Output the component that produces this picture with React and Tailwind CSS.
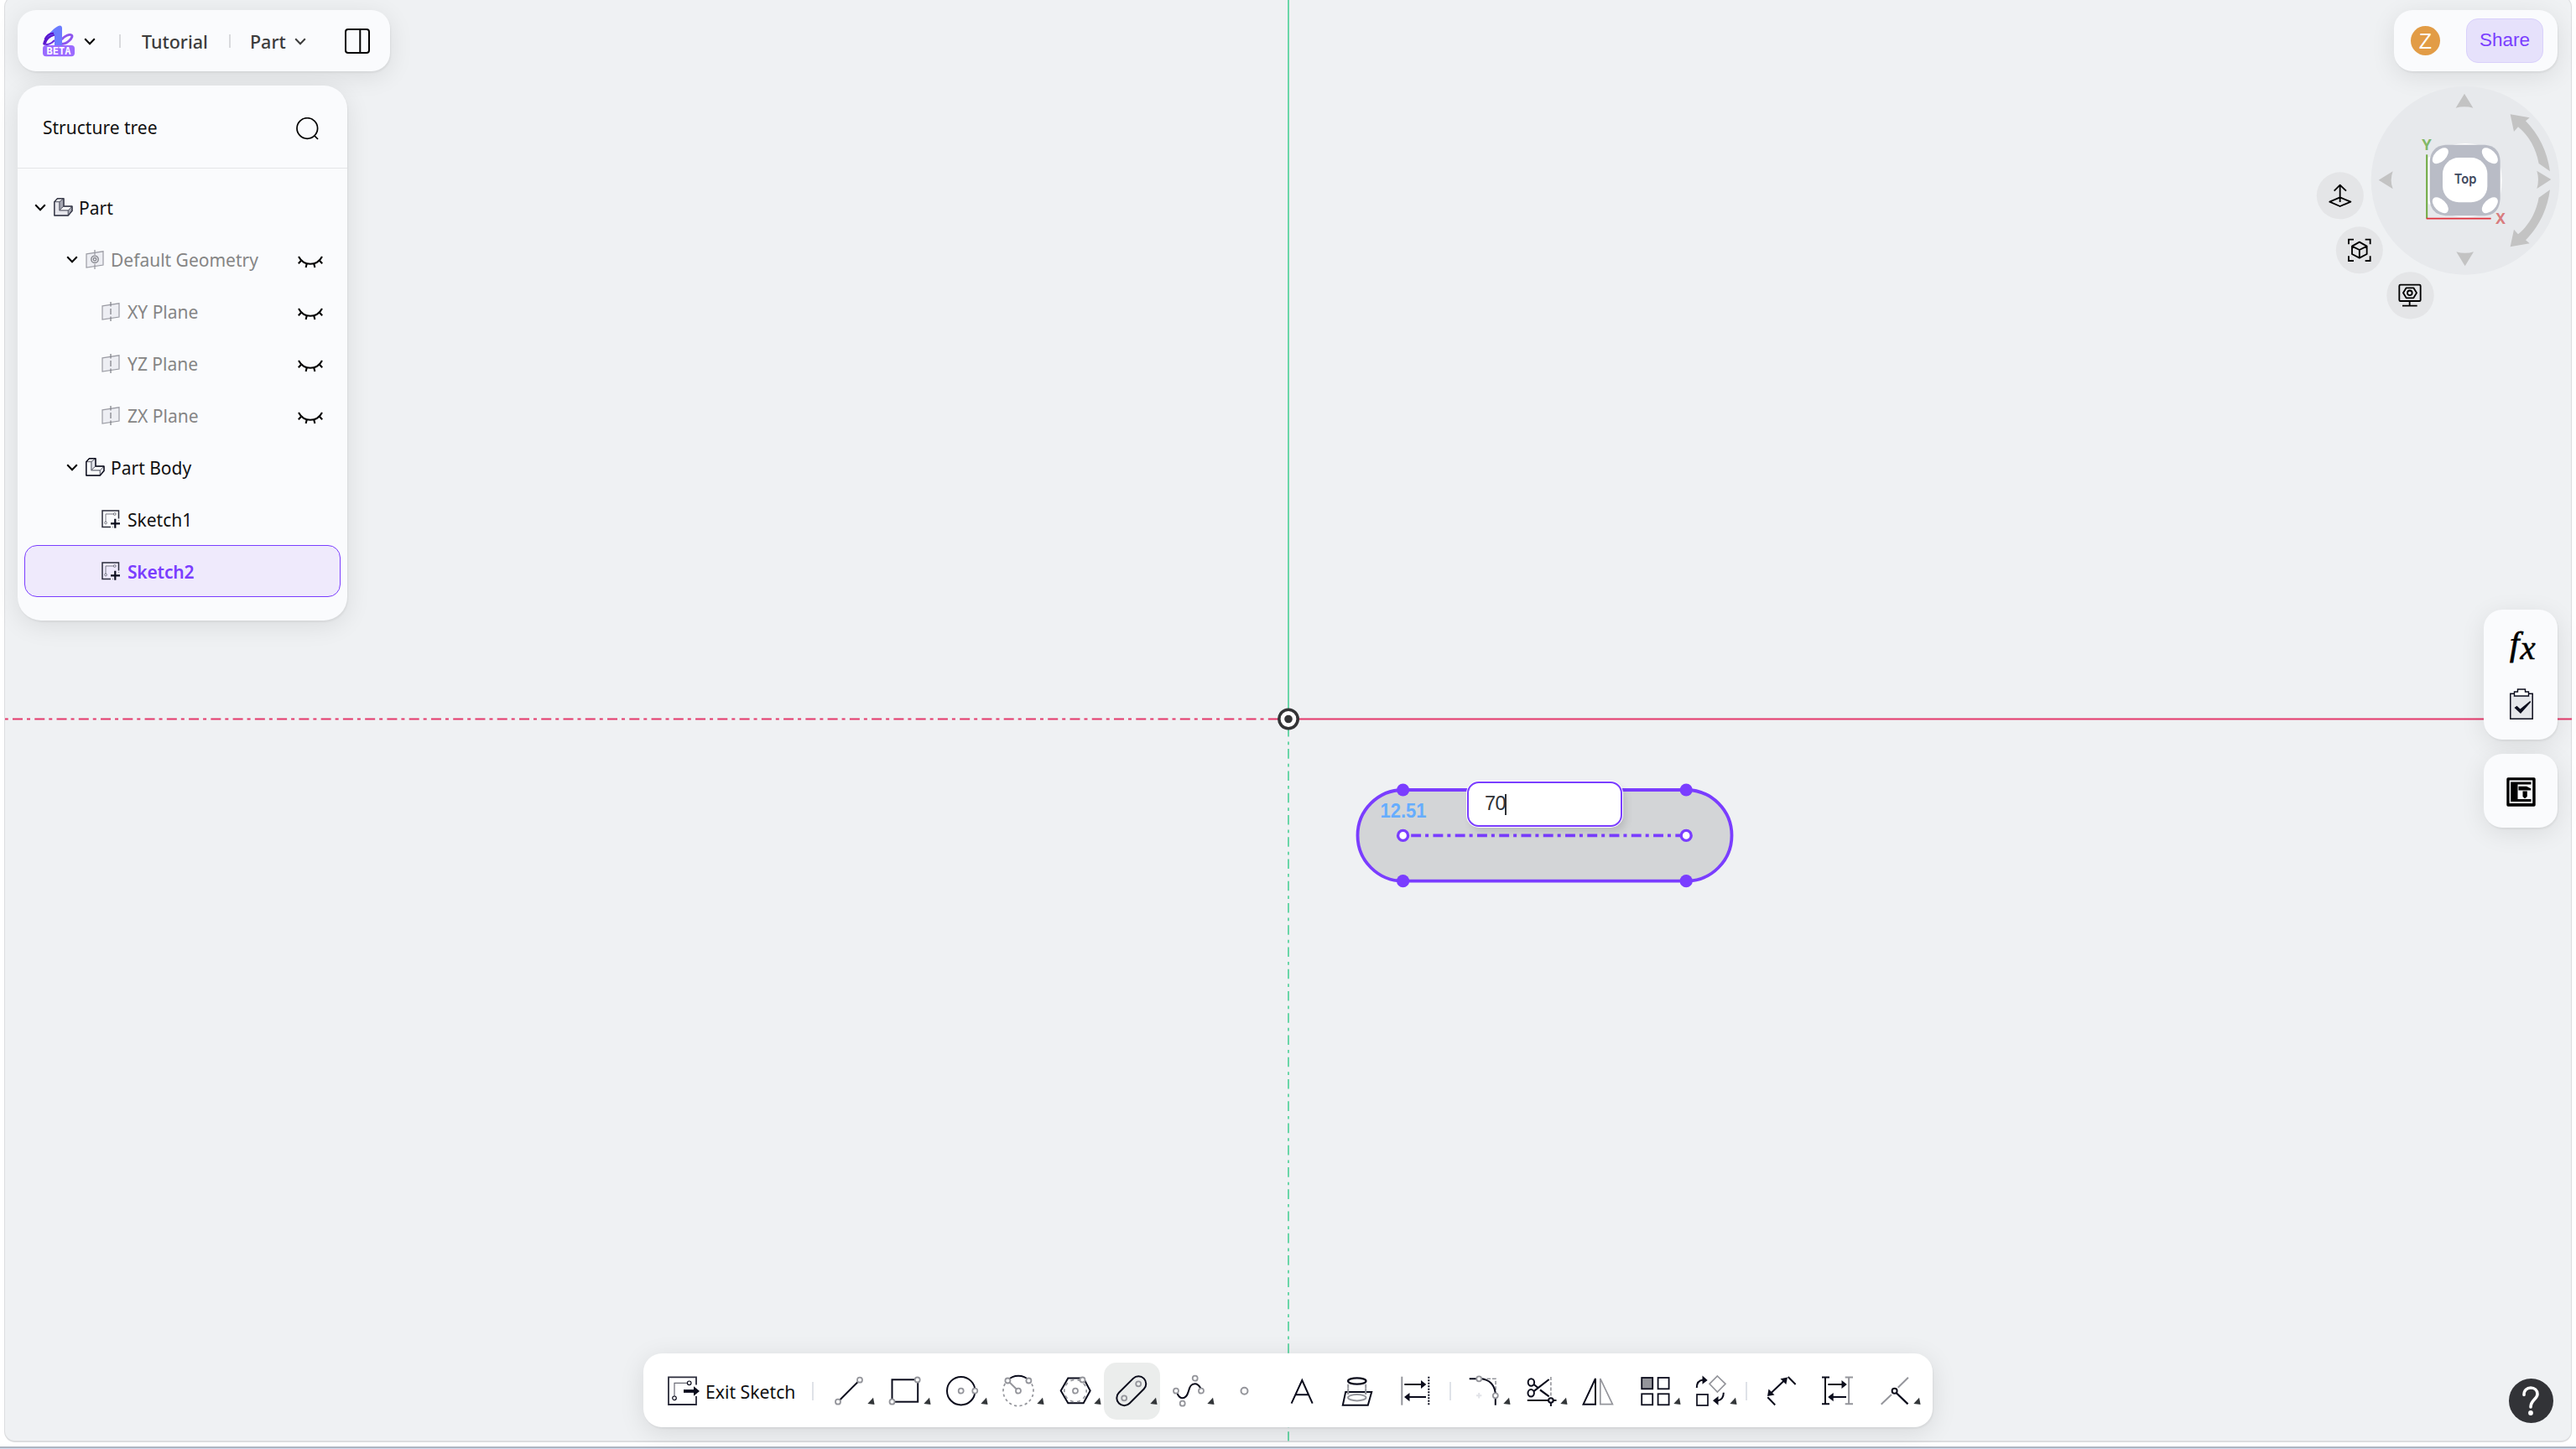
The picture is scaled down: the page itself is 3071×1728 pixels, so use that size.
import React from "react";

const INK = "#0b0c1c";
const GRAY = "#94959b";

const CARD =
  "bg-[#fafbfd] shadow-[1px_2px_2px_rgba(0,0,0,0.05),0_6px_30px_rgba(0,0,0,0.09)]";

function Chevron({ color = "#000", className = "" }) {
  return (
    <svg width="14" height="9" viewBox="0 0 14 9" fill="none" className={className}>
      <path d="M1.2 1.2 L7 7.2 L12.8 1.2" stroke={color} strokeWidth="2" />
    </svg>
  );
}

function Logo() {
  return (
    <svg width="38" height="38" viewBox="0 0 38 38">
      <path d="M13.500 11 C8 12 3 17 2 22" fill="none" stroke="#5a16cf" strokeWidth="3.600" strokeLinecap="round" />
      <path d="M3 22.500 C6 24 11 21.500 14 18" fill="none" stroke="#6a2be0" strokeWidth="2" />
      <path d="M22.500 22.500 C30 22.500 36.500 14 34.500 12 C32 10 26 13 22.500 17" fill="none" stroke="#8d55ee" strokeWidth="2.800" />
      <path d="M3 16.500 C8 9 14 3 18.500 1 C21 -.3 23 1 23 3.500 V25 H14 V11 C9.500 11.500 6 13.500 3 16.500 Z" fill="#6b7cff" />
      <path d="M2.500 17 C5 12 9 9.500 13 10" fill="none" stroke="#5a16cf" strokeWidth="2.400" />
      <rect x="0" y="24" width="38" height="13.200" rx="4" fill="#9b6bff" />
      <text x="19" y="35" textAnchor="middle" textLength="29" lengthAdjust="spacingAndGlyphs" fontFamily="'DejaVu Sans Mono', monospace" fontWeight="700" fontSize="12.500" fill="#fff">
        BETA
      </text>
    </svg>
  );
}

function PartIcon({ shaded }) {
  const inner = shaded ? "#5d5f6d" : "#6a6b78";
  return (
    <svg width="23" height="22" viewBox="0 0 23 22" fill="none" strokeLinejoin="round">
      <g stroke={inner} strokeWidth="1">
        <path d="M.8 4.700 L4.400 .8 H12 L6.800 4.700 Z" fill="#fff" />
        <path d="M6.800 4.700 L12 .8 V10 L6.800 14.800 Z" fill={shaded ? "#a5a6b1" : "#e3e4ea"} />
        <path d="M.8 4.700 H6.800 V14.800 H17.300 V21 H.8 Z" fill={shaded ? "#e6e6ec" : "#fafbfd"} />
        <path d="M6.800 14.800 L12 10 H22 L17.300 14.800 Z" fill="#fff" />
        <path d="M17.300 14.800 L22 10 V15.500 L17.300 21 Z" fill={shaded ? "#a5a6b1" : "#e3e4ea"} />
      </g>
      <path d="M.8 21 V4.700 L4.400 .8 H12 V10 H22 V15.500 L17.300 21 Z" stroke={shaded ? "#3b3d4c" : INK} strokeWidth="1.400" />
    </svg>
  );
}

function PlaneIcon({ geometry }) {
  return (
    <svg width="22" height="23" viewBox="0 0 22 23" fill="none" stroke="#9b9ca4" strokeWidth="1.200">
      <path d="M1 4.800 L21 1.800 V18 L1 21 Z" fill="#edeef3" />
      {geometry ? (
        <>
          <path d="M11 0 V6 M11 17 V23" strokeWidth="1.300" />
          <circle cx="11" cy="11.300" r="4.200" stroke="#85868d" strokeWidth="1.400" />
          <circle cx="11" cy="11.300" r="1.800" stroke="#85868d" strokeWidth="1.300" />
        </>
      ) : (
        <path d="M11 0 V5.500 M11 8 V15 M11 17.500 V23" stroke="#85868d" strokeWidth="1.300" />
      )}
    </svg>
  );
}

function SketchIcon() {
  return (
    <svg width="22" height="22" viewBox="0 0 22 22" fill="none">
      <path d="M20.500 10.500 V1 H1 V20.500 H11" stroke="#2b2c3a" strokeWidth="1.500" />
      <path d="M13.500 20.500 H14 M20.500 12 V12.500" stroke="#2b2c3a" strokeWidth="1.300" />
      <path d="M5 14 V5 H14" stroke="#7c7d86" strokeWidth="1" />
      <circle cx="15.700" cy="5" r="1.400" stroke="#6a6b75" strokeWidth=".9" />
      <circle cx="5" cy="15.500" r="1.400" stroke="#6a6b75" strokeWidth=".9" />
      <path d="M16.300 10.800 V21.800 M11 16.300 H22" stroke={INK} strokeWidth="2.200" />
    </svg>
  );
}

function HiddenEye() {
  return (
    <svg width="30" height="15" viewBox="0 0 30 15" fill="none" stroke="#000" strokeWidth="2.100">
      <path d="M1 1 C4 6.500 9 9.800 15 9.800 S26 6.500 29 1" />
      <path d="M4.800 5 L.8 9.300 M10.800 9.300 L9.600 14 M19.200 9.300 L20.400 14 M25.200 5 L29.200 9.300" />
    </svg>
  );
}

const TREE = [
  { label: "Part", level: 0, icon: "part" },
  { label: "Default Geometry", level: 1, icon: "geometry", hidden: true },
  { label: "XY Plane", level: 2, icon: "plane", hidden: true },
  { label: "YZ Plane", level: 2, icon: "plane", hidden: true },
  { label: "ZX Plane", level: 2, icon: "plane", hidden: true },
  { label: "Part Body", level: 1, icon: "body" },
  { label: "Sketch1", level: 2, icon: "sketch" },
  { label: "Sketch2", level: 2, icon: "sketch", selected: true },
];

const INDENT = ["pl-[11px]", "pl-[49px]", "pl-[91px]"];

function TreeRow({ label, level, icon, hidden, selected }) {
  const tone = selected
    ? "font-semibold tracking-[-0.2px] text-[#7a3dff]"
    : hidden
      ? "text-[#858585]"
      : "text-[#111]";
  return (
    <div
      className={`flex h-[62px] items-center rounded-[15px] border pr-[20px] ${INDENT[level]} ${
        selected ? "border-[#7a3dff] bg-[#efeafc]" : "border-transparent"
      }`}
    >
      {level < 2 && <Chevron className="mr-[9px]" />}
      <span className={`flex items-center ${level < 2 ? "w-[30px]" : "w-[31px]"}`}>
        {icon === "part" && <PartIcon shaded />}
        {icon === "body" && <PartIcon />}
        {icon === "geometry" && <PlaneIcon geometry />}
        {icon === "plane" && <PlaneIcon />}
        {icon === "sketch" && <SketchIcon />}
      </span>
      <span className={`flex-1 pt-[2px] whitespace-nowrap ${tone}`}>{label}</span>
      {hidden && (
        <span className="mt-[6px]">
          <HiddenEye />
        </span>
      )}
    </div>
  );
}

function TopBar() {
  return (
    <div className={`flex h-[73px] w-[444px] items-center rounded-[22px] pt-px pl-[30px] text-[21.500px] font-medium text-[#3c3c3c] ${CARD}`}>
      <Logo />
      <Chevron className="ml-[11px]" />
      <span className="ml-[28px] h-[16px] w-[2px] bg-[#d9dadd]" />
      <span className="ml-[25px] w-[104px] pt-px">Tutorial</span>
      <span className="h-[16px] w-[2px] bg-[#d9dadd]" />
      <span className="ml-[23px] w-[53px] pt-px">Part</span>
      <Chevron color="#3c3c3c" />
      <svg width="30" height="30" viewBox="0 0 30 30" fill="none" stroke="#000" strokeWidth="2" className="ml-[46px]">
        <rect x="1" y="1" width="28" height="28" rx="3" />
        <path d="M18.300 1 V29" />
      </svg>
    </div>
  );
}

function StructureTree() {
  return (
    <div className={`mt-[17px] h-[638px] w-[392.500px] rounded-[28px] ${CARD}`}>
      <div className="flex h-[99px] items-center justify-between border-b border-[#e4e5e8] pr-[34px] pl-[30px] text-[#111]">
        <span className="pt-[2px]">Structure tree</span>
        <svg width="27" height="27" viewBox="0 0 27 27" fill="none" stroke="#000" strokeWidth="1.700" className="mt-[4px]">
          <circle cx="13.300" cy="13" r="12.300" />
          <path d="M21.500 21.500 L26 26" />
        </svg>
      </div>
      <div className="px-[8px] pt-[15px]">
        {TREE.map((row) => (
          <TreeRow key={row.label} {...row} />
        ))}
      </div>
    </div>
  );
}

function ViewWheel() {
  return (
    <svg width="293.330" height="279" viewBox="60 305 880 837" fill="none" className="mt-[16.670px] mr-[-3px]">
      <circle cx="597" cy="645" r="337" fill="#e7e9ec" />
      <g fill="#c3c3c3">
        <path d="M594 334 L625 385 Q594 377 563 385 Z" />
        <path d="M596 951 L565 900 Q596 909 627 900 Z" />
        <path d="M287 643 L338 612 Q326 643 338 675 Z" />
        <path d="M904 641 L853 610 Q863 641 853 674 Z" />
        <path d="M758 408 L827 420 L813 432 C860 480 890 540 900 612 L860 584 C850 530 825 485 786 453 L771 470 Z" />
        <path d="M758 882 L827 870 L813 858 C860 810 890 750 900 678 L860 706 C850 760 825 805 786 837 L771 820 Z" />
      </g>
      <path d="M540 520 Q597 504 655 520 M722 590 Q734 645 722 700 M540 768 Q597 784 655 768 M470 590 Q462 645 470 700" fill="#fff" />
      <rect x="464" y="560" width="12" height="170" rx="6" fill="#fff" />
      <path d="M526 517 H668 Q720 522 722 575 V710 Q718 768 668 771 H526 Q474 766 470 715 V575 Q474 522 526 517 Z" fill="#b9bcc6" />
      <g fill="#fff">
        <rect x="516" y="563" width="160" height="160" rx="58" />
        <ellipse cx="508" cy="556" rx="35" ry="20" transform="rotate(-45 508 556)" />
        <ellipse cx="685" cy="556" rx="35" ry="20" transform="rotate(45 685 556)" />
        <ellipse cx="508" cy="733" rx="35" ry="20" transform="rotate(45 508 733)" />
        <ellipse cx="685" cy="733" rx="35" ry="20" transform="rotate(-45 685 733)" />
      </g>
      <text x="597" y="656" textAnchor="middle" textLength="80" lengthAdjust="spacingAndGlyphs" fontFamily="Inter, sans-serif" fontWeight="600" fontSize="49" fill="#3f4a60">
        Top
      </text>
      <path d="M459.500 552 V781" stroke="#6faa41" strokeWidth="6" />
      <path d="M458 781 H689" stroke="#e0323c" strokeWidth="5" />
      <text x="459" y="536" textAnchor="middle" fontFamily="Inter, sans-serif" fontWeight="700" fontSize="51" fill="#82b866">
        Y
      </text>
      <text x="723" y="800" textAnchor="middle" fontFamily="Inter, sans-serif" fontWeight="700" fontSize="51" fill="#d87b7d">
        X
      </text>
      <g fill="#e4e5e7">
        <circle cx="149.500" cy="699" r="84" />
        <circle cx="218.500" cy="894" r="84" />
        <circle cx="400.500" cy="1056" r="84.500" />
      </g>
      <g stroke="#000" strokeWidth="5.500" strokeLinejoin="round">
        <path d="M149 722 V662 M128 682 L149 661 L171 682 M149 705 L187 721 L149 737 L112 721 Z" />
        <path d="M180 873 V856 H198 M239 856 H257 V873 M180 915 V932 H198 M239 932 H257 V915" strokeLinejoin="miter" />
        <path d="M218.500 865 L245 880 V908 L218.500 922 L192 908 V880 Z M192 880 L218.500 893 L245 880 M218.500 893 V922" />
        <rect x="361" y="1018" width="76" height="58" rx="4" />
        <path d="M398 1076 V1093 M372 1093 H425" />
        <path d="M386 1029 H412 L423 1047 L412 1065 H386 L375 1047 Z" />
        <circle cx="398.500" cy="1047" r="8.500" />
      </g>
    </svg>
  );
}

function AccountBar() {
  return (
    <div className={`mr-[1.500px] flex h-[73px] w-[195px] items-center justify-between rounded-[22px] pr-[17px] pl-[20px] ${CARD}`}>
      <span className="flex size-[35px] items-center justify-center rounded-full bg-[#e29c46] pt-px font-['Liberation_Sans',sans-serif] text-[25px] leading-none text-white">
        Z
      </span>
      <span className="flex h-[53px] w-[92px] items-center justify-center rounded-[14px] border border-[#d9d0fb] bg-[#e6e1fb] pb-px font-['Liberation_Sans',sans-serif] text-[22.500px] text-[#7a3dff]">
        Share
      </span>
    </div>
  );
}

function SidePanels() {
  return (
    <div className="mt-[346px] mr-[1.500px] flex flex-col gap-[17px]">
      <div className={`flex h-[155.500px] w-[88.500px] flex-col items-center rounded-[22px] pt-[16px] ${CARD}`}>
        <svg width="68" height="62" viewBox="-15 -10 68 62">
          <text x="6" y="28" fontFamily="'Liberation Serif', serif" fontStyle="italic" fontSize="41" fill="#000" stroke="#000" strokeWidth=".8">
            f
          </text>
          <text x="18.500" y="33" fontFamily="'Liberation Serif', serif" fontStyle="italic" fontSize="41" fill="#000" stroke="#000" strokeWidth=".5">
            x
          </text>
        </svg>
        <svg width="28" height="37" viewBox="0 0 28 37" className="mt-[16px] ml-[2px]">
          <path d="M.8 6.300 H27.200 V36.200 H.8 Z" fill="#e6e7eb" stroke={INK} strokeWidth="1.500" />
          <path d="M5.500 9 V4 H9.500 V1 H18.500 V4 H22.500 V9 Z" fill="#fff" stroke={INK} strokeWidth="1.400" />
          <path d="M5.500 23 L8.500 20.800 L12.500 24.500 L24.500 14.800 L25 16.500 L13 30 Z" fill={INK} />
        </svg>
      </div>
      <div className={`flex h-[88px] w-[88.500px] items-center justify-center rounded-[22px] pt-[3px] pl-px ${CARD}`}>
        <svg width="35" height="35" viewBox="0 0 35 35" fill="#000">
          <path fillRule="evenodd" d="M2 .3 H33 Q34.700 .3 34.700 2 V33 Q34.700 34.700 33 34.700 H2 Q.3 34.700 .3 33 V2 Q.3 .3 2 .3 Z M3.600 3.600 V31 H31.200 V3.600 Z" />
          <path d="M5.200 5.500 H29.500 V8.500 H13.500 V26 H29.500 V29 H5.200 Z" />
          <path d="M14.500 10.800 H24 L29.500 13.500 L29 15.500 H14.500 Z M19.500 16.500 H24.800 V23 L22 25.200 L19.500 23 Z" />
        </svg>
      </div>
    </div>
  );
}

function Node({ x, y, r = 3, sw = 1.8 }) {
  return <circle cx={x} cy={y} r={r} fill="#fff" stroke={GRAY} strokeWidth={sw} />;
}

function Tool({ menu, active, children }) {
  return (
    <button
      className={`flex h-[68px] w-[67.500px] items-center justify-center rounded-[15px] ${active ? "bg-[#ebedec]" : ""}`}
    >
      <svg width="68" height="68" viewBox="-34 -34 68 68" fill="none" stroke={INK} strokeWidth="2" className="shrink-0">
        {children}
        {menu && <path d="M22.300 15 L29 7.700 L30.600 16 Z" fill="#333639" stroke="none" />}
      </svg>
    </button>
  );
}

function Divider() {
  return <span className="mx-[7px] h-[22px] w-[2px] bg-[#dfe2e8]" />;
}

function Toolbar() {
  return (
    <div className="flex h-[88px] w-[1537px] items-center rounded-[22px] bg-white pt-[2px] pl-[29px] shadow-[1px_2px_2px_rgba(0,0,0,0.05),0_6px_30px_rgba(0,0,0,0.1)]">
      <svg width="38" height="35" viewBox="0 0 38 35" fill="none" className="mt-[-1px]">
        <path d="M34 10.500 V1.300 H1 V34 H34 V24" stroke="#2a2b3a" strokeWidth="1.800" />
        <path d="M8 24 V8.300 H23.500" stroke="#6b6c76" strokeWidth="1.200" />
        <circle cx="25.700" cy="8.300" r="2.300" stroke={INK} strokeWidth="1.200" />
        <circle cx="8" cy="26.300" r="2.300" stroke={INK} strokeWidth="1.200" />
        <path d="M19 18 H32" stroke={INK} strokeWidth="3.800" />
        <path d="M31 12.300 L38 18 L31 23.700 Z" fill={INK} />
      </svg>
      <span className="ml-[7px] w-[127px] pt-px text-[21.200px] whitespace-nowrap text-[#111]">Exit Sketch</span>
      <span className="mr-[8px] h-[22px] w-[2px] bg-[#dfe2e8]" />

      <Tool menu>
        <path d="M-13 12.700 L13 -13.300" />
        <Node x={-13} y={12.7} />
        <Node x={13} y={-13.3} />
      </Tool>
      <Tool menu>
        <rect x="-15.500" y="-13.700" width="30.700" height="26.400" />
        <Node x={14.7} y={-13.5} />
        <Node x={-15.5} y={12.7} />
      </Tool>
      <Tool menu>
        <circle cx="-1.300" cy="-.3" r="16.700" />
        <Node x={-1.3} y={-0.3} />
        <Node x={15.3} y={-0.3} />
      </Tool>
      <Tool menu>
        <path d="M12.800 -13 A18 18 0 1 1 -12.800 -13" stroke={GRAY} strokeWidth="1.700" strokeDasharray="3.200 3.200" strokeDashoffset="1" />
        <path d="M-12.800 -13 A18 18 0 0 1 12.800 -13" />
        <path d="M-12.800 -12.700 L0 -.3" stroke={GRAY} />
        <Node x={-12.6} y={-12.5} />
        <Node x={12.4} y={-12.5} />
        <Node x={0} y={-0.3} />
      </Tool>
      <Tool menu>
        <path d="M-8.700 -15.500 H9.700 L17.700 -.5 L9.700 14.300 H-8.700 L-17.300 -.5 Z" />
        <circle cx="0" cy="-.4" r="13.200" stroke={GRAY} strokeWidth="1.700" strokeDasharray="4 4.300" strokeDashoffset="2" />
        <Node x={8.5} y={-13.5} />
        <Node x={0} y={-0.3} />
      </Tool>
      <Tool menu active>
        <rect x="-21" y="-9" width="42" height="18" rx="9" transform="translate(-.2 -.3) rotate(-45)" />
        <circle cx="-8.800" cy="8.300" r="3" stroke={GRAY} strokeWidth="1.800" />
        <circle cx="8.200" cy="-8.700" r="3" stroke={GRAY} strokeWidth="1.800" />
      </Tool>
      <Tool menu>
        <path d="M-13.500 3 C-12 6 -10.500 8.300 -7.300 8.300 C-2 8.300 -1 3 0 -.3 C1.500 -5.500 3 -8.800 7.500 -8.800 C11 -8.800 13 -6 14.300 -3.500" />
        <Node x={-15} y={-0.3} />
        <Node x={-7.3} y={14.7} />
        <Node x={7.7} y={-15.3} />
        <Node x={15} y={-0.3} />
      </Tool>
      <Tool>
        <Node x={-0.5} y={-0.3} r={4} sw={2} />
      </Tool>
      <Tool>
        <path d="M-12.400 14.600 L.3 -13 L12.700 14.600 M-8 4.300 H8.500" />
      </Tool>
      <Tool>
        <path d="M-11.800 -8.300 V4 M9.200 -8.300 V4" stroke={GRAY} strokeDasharray="5 2.500" />
        <path d="M-14.800 .9 H16.200 L11.800 16.700 H-18.200 Z" />
        <path d="M-11.800 -3 V4 M9.200 -3 V4" stroke={GRAY} />
        <ellipse cx="-1.200" cy="-12" rx="10.700" ry="3.700" strokeWidth="2.300" />
        <ellipse cx="-1.200" cy="7.700" rx="10.700" ry="3.700" stroke={GRAY} />
      </Tool>
      <Tool>
        <path d="M-15.700 -17.300 V16.700" stroke={GRAY} />
        <path d="M16.300 -17.300 V17" strokeDasharray="2 1.500" />
        <path d="M-12.700 -8 H9 M13 7 H-9" />
        <path d="M7 -13 L13.300 -8 L7 -3 Z M-6.500 2 L-13 7 L-6.500 12.300 Z" fill={INK} stroke="none" />
      </Tool>
      <Divider />
      <Tool menu>
        <path d="M-4 -14.700 H13.100 V4" stroke={GRAY} strokeWidth="1.600" strokeDasharray="4.500 2" />
        <path d="M-18.300 -14.700 H-6.800 C6 -14.700 12.800 -7 12.800 5.300 V16.700" />
        <Node x={-6.8} y={-14.7} />
        <Node x={12.8} y={5.3} />
        <path d="M-10 5.300 H-3.600 M-6.800 2 V8.600" stroke="#e2e3e8" />
      </Tool>
      <Tool menu>
        <path d="M10.900 -17 V8" stroke={GRAY} strokeWidth="1.600" strokeDasharray="4 2.200" />
        <ellipse cx="-12.600" cy="-10.500" rx="3.700" ry="4.200" />
        <ellipse cx="-12.800" cy="2.300" rx="3.700" ry="4.200" />
        <path d="M-9.800 .3 L8.700 -14 M-9.500 -8 L-5 -4.500 M-2 -1.500 L8.700 6.300" strokeWidth="2.200" />
        <path d="M-17.200 11 H17.500 M10.900 11 V18" />
        <circle cx="10.900" cy="11" r="2.800" fill="#fff" />
      </Tool>
      <Tool>
        <path d="M-17.400 15.700 L-3 -15 V15.700 Z" />
        <path d="M17.400 15.700 L2.800 -15 V15.700 Z" stroke={GRAY} strokeWidth="1.700" />
      </Tool>
      <Tool menu>
        <rect x="-15.800" y="-16" width="13" height="13.300" fill={GRAY} strokeWidth="1.800" />
        <rect x="3.600" y="-16" width="13" height="13.300" strokeWidth="1.800" />
        <rect x="-15.800" y="3.300" width="13" height="13" strokeWidth="1.800" />
        <rect x="3.600" y="3.300" width="13" height="13" strokeWidth="1.800" />
      </Tool>
      <Tool menu>
        <rect x="-17" y="4" width="13" height="13" strokeWidth="1.700" />
        <path d="M7.400 -18 L17 -8.700 L7.400 1 L-2 -8.700 Z" stroke={GRAY} strokeWidth="1.700" />
        <path d="M-17.200 -4 C-17.200 -9.500 -15 -13 -9.500 -13.500 M14.800 1.700 C14.800 7 12.500 10.500 7.500 11.500" />
        <path d="M-10.500 -18.500 L-4.300 -13 L-10.500 -8.300 Z M8.500 6 L2 11.300 L8.500 16.800 Z" fill={INK} stroke="none" />
      </Tool>
      <Divider />
      <Tool>
        <path d="M4 -13.500 L-14 3.500 M7.700 -17 L16.600 -8 M-16.700 7.300 L-7.800 16.500" />
        <path d="M7 -16.500 L5.300 -8 L-1.500 -14.700 Z M-17 6 L-15.500 -2.500 L-8.500 4.500 Z" fill={INK} stroke="none" />
      </Tool>
      <Tool>
        <path d="M-15 -16.500 V15.300 M-19 -16.500 H-10 M-19 15.300 H-10" />
        <path d="M13.100 -16.500 V15.300 M8.700 -16.500 H18 M8.700 15.300 H18" stroke={GRAY} />
        <path d="M-11.700 -8 H6 M10 7 H-6" />
        <path d="M4.500 -13 L10.800 -8 L4.500 -3 Z M-5.300 2 L-11.800 7 L-5.300 12.300 Z" fill={INK} stroke="none" />
      </Tool>
      <Tool menu>
        <path d="M-16.300 15.700 L-4 4 M3.700 -4.300 L15.900 -16.300" stroke={GRAY} />
        <path d="M1 1.500 L15.500 15.300" strokeWidth="2.300" />
        <circle cx="-.4" cy="-.3" r="3" fill="#fff" />
      </Tool>
    </div>
  );
}

function SketchCanvas() {
  return (
    <>
      <svg className="absolute inset-0" width="3071" height="1720" viewBox="0 0 3071 1720" fill="none">
        <clipPath id="view">
          <rect x="6" y="0" width="3060" height="1718.500" />
        </clipPath>
        <g clipPath="url(#view)">
          <path d="M1536 0 V857.500" stroke="#6ad6a8" strokeWidth="2" />
          <path d="M1536 840.600 V1720" stroke="#6ad6a8" strokeWidth="2" strokeDasharray="11.600 6 3.700 4.960" />
          <path d="M1536 857.500 H3071" stroke="#e4386a" strokeWidth="2" />
          <path d="M-11.260 857.500 H1536" stroke="#e4386a" strokeWidth="2" strokeDasharray="12 5 4 5.260" />
        </g>
        <circle cx="1536" cy="857.500" r="11.200" fill="#fff" stroke="#333436" strokeWidth="3.600" />
        <circle cx="1536" cy="857.500" r="4.800" fill="#333436" />

        <rect x="1618.500" y="942" width="446" height="108.700" rx="54.350" fill="#d3d5d7" stroke="#7a3dff" strokeWidth="3.800" />
        <path d="M1682.200 996.400 H2005" stroke="#7a3dff" strokeWidth="3.600" strokeDasharray="11.900 5 4 5.360" />
        <g fill="#7a3dff">
          <circle cx="1672.600" cy="942" r="7.600" />
          <circle cx="2010.200" cy="942" r="7.600" />
          <circle cx="1672.600" cy="1050.700" r="7.600" />
          <circle cx="2010.200" cy="1050.700" r="7.600" />
        </g>
        <g fill="#fff" stroke="#7a3dff" strokeWidth="3.400">
          <circle cx="1672.600" cy="996.400" r="6" />
          <circle cx="2010.200" cy="996.400" r="6" />
        </g>
        <text x="1645.500" y="975" textLength="55" lengthAdjust="spacingAndGlyphs" fontFamily="'Liberation Sans', sans-serif" fontWeight="700" fontSize="23.500" fill="#66adff">
          12.51
        </text>
      </svg>
      <div className="absolute top-[932px] left-[1749px] flex h-[54px] w-[185px] items-center rounded-[14px] border-2 border-[#7a3dff] bg-white pl-[19px] font-['Liberation_Sans',sans-serif] text-[23.500px] tracking-[-0.5px] text-[#303236] shadow-[0_0_0_1px_#fff,4px_6px_10px_rgba(0,0,0,0.12)]">
        <span>70</span>
        <span className="ml-[-1px] h-[25px] w-[2px] bg-[#303236]" />
      </div>
    </>
  );
}

export default function App() {
  return (
    <div className="relative flex h-[1728px] w-[3071px] flex-col overflow-hidden bg-white font-['Noto_Sans','Open_Sans',sans-serif] text-[21px] leading-none">
      <div className="mx-[5px] mt-[-5px] h-[1725px] rounded-[13px] border border-b-2 border-[#dcdddf] bg-[#eff1f3]" />
      <div className="mt-[5px] h-[2px] bg-[#adb5c0]" />
      <div className="h-[1px] bg-[#d4dcf0]" />

      <SketchCanvas />

      <div className="absolute inset-0 grid h-[1720px] grid-cols-[1fr_auto_1fr]">
        <div className="pt-[12px] pl-[21px]">
          <TopBar />
          <StructureTree />
        </div>
        <div className="flex items-end pb-[18px]">
          <Toolbar />
        </div>
        <div className="flex flex-col items-end pt-[12px] pr-[20.500px]">
          <AccountBar />
          <ViewWheel />
          <SidePanels />
          <span className="mt-auto mr-[7px] mb-[23px] flex size-[53px] items-center justify-center rounded-full bg-[#323337]">
            <svg width="22" height="36" viewBox="0 0 22 36" fill="none">
              <path d="M3 10.500 C3 5 6.500 2 11 2 S19 5 19 9.500 C19 15.500 11 16.500 11 25" stroke="#fff" strokeWidth="3.600" strokeLinecap="round" />
              <circle cx="11" cy="32" r="2.900" fill="#fff" />
            </svg>
          </span>
        </div>
      </div>
    </div>
  );
}
